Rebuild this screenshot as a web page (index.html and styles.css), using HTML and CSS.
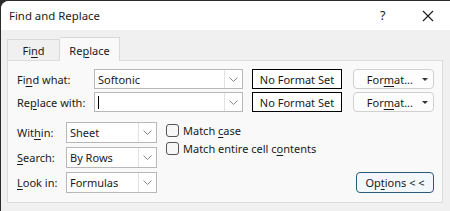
FILE: index.html
```html
<!DOCTYPE html>
<html>
<head>
<meta charset="utf-8">
<link rel="stylesheet" href="styles.css">
</head>
<body>
<div class="window">
  <div class="titlebar">
    <span class="title">Find and Replace</span>
    <span class="help">?</span>
    <span class="close"><svg width="12" height="12" viewBox="0 0 12 12"><path d="M1 1 L11 11 M11 1 L1 11" stroke="#1a1a1a" stroke-width="1.1" fill="none"/></svg></span>
  </div>
  <div class="content">
    <div class="tabs">
      <div class="tab">Fi<u>n</u>d</div>
      <div class="tab active">Re<u>p</u>lace</div>
    </div>
    <div class="panel">
      <div class="toprows">
        <div class="label">Fi<u>n</u>d what:</div>
        <div class="combo"><span class="val">Softonic</span><span class="arrow"><svg width="9" height="5" viewBox="0 0 9 5"><path d="M0.5 0.5 L4.5 4.5 L8.5 0.5" stroke="#8a8a8a" fill="none"/></svg></span></div>
        <div class="nofmt">No Format Set</div>
        <div class="fmtbtn"><span>For<u>m</u>at...</span><svg width="6" height="3" viewBox="0 0 6 3"><path d="M0 0 L6 0 L3 3 Z" fill="#333"/></svg></div>

        <div class="label">Re<u>p</u>lace with:</div>
        <div class="combo"><span class="val"><span class="caret"></span></span><span class="arrow"><svg width="9" height="5" viewBox="0 0 9 5"><path d="M0.5 0.5 L4.5 4.5 L8.5 0.5" stroke="#8a8a8a" fill="none"/></svg></span></div>
        <div class="nofmt">No Format Set</div>
        <div class="fmtbtn"><span>For<u>m</u>at...</span><svg width="6" height="3" viewBox="0 0 6 3"><path d="M0 0 L6 0 L3 3 Z" fill="#333"/></svg></div>
      </div>
      <div class="bottom">
        <div class="opts">
          <div class="label">Wit<u>h</u>in:</div>
          <div class="combo small"><span class="val">Sheet</span><span class="arrow"><svg width="9" height="5" viewBox="0 0 9 5"><path d="M0.5 0.5 L4.5 4.5 L8.5 0.5" stroke="#8a8a8a" fill="none"/></svg></span></div>
          <div class="label"><u>S</u>earch:</div>
          <div class="combo small"><span class="val">By Rows</span><span class="arrow"><svg width="9" height="5" viewBox="0 0 9 5"><path d="M0.5 0.5 L4.5 4.5 L8.5 0.5" stroke="#8a8a8a" fill="none"/></svg></span></div>
          <div class="label"><u>L</u>ook in:</div>
          <div class="combo small"><span class="val">Formulas</span><span class="arrow"><svg width="9" height="5" viewBox="0 0 9 5"><path d="M0.5 0.5 L4.5 4.5 L8.5 0.5" stroke="#8a8a8a" fill="none"/></svg></span></div>
        </div>
        <div class="checks">
          <div class="check"><span class="box"></span><span>Match <u>c</u>ase</span></div>
          <div class="check"><span class="box"></span><span>Match entire cell c<u>o</u>ntents</span></div>
        </div>
        <div class="optbtn">Op<u>t</u>ions &lt; &lt;</div>
      </div>
    </div>
  </div>
</div>
</body>
</html>
```
FILE: styles.css
```css
html, body {
  margin: 0;
  padding: 0;
  width: 450px;
  height: 211px;
  overflow: hidden;
  background: #2b2b2b;
}
body {
  font-family: "Noto Sans", "Open Sans", sans-serif;
  font-size: 11px;
  color: #1a1a1a;
}
u { text-decoration-thickness: 1px; text-underline-offset: 2px; }
.window {
  box-sizing: border-box;
  width: 456px;
  height: 211px;
  margin-top: 1px;
  margin-left: 1px;
  background: #f0f0f0;
  border-radius: 8px 8px 0 0;
  overflow: hidden;
  display: flex;
  flex-direction: column;
}
.titlebar {
  height: 29px;
  background: #ffffff;
  display: flex;
  align-items: center;
  padding-left: 8px;
  flex: none;
}
.title { flex: 1; font-size: 11.4px; }
.help { width: 8px; margin-right: 34px; font-size: 12.5px; }
.close { width: 12px; height: 12px; margin-right: 23px; display: flex; }
.content {
  padding: 7px 0 0 6px;
  flex: 1;
  display: flex;
  flex-direction: column;
}
.tabs {
  display: flex;
  align-items: flex-end;
  height: 23px;
  position: relative;
  z-index: 1;
}
.tab {
  box-sizing: border-box;
  height: 21px;
  width: 53px;
  border: 1px solid #d9d9d9;
  border-bottom: none;
  background: #f0f0f0;
  display: flex;
  align-items: center;
  justify-content: center;
  padding-top: 1px;
}
.tab.active {
  height: 24px;
  width: 60px;
  background: #f9f9f9;
  margin-bottom: -1px;
  border-left: none;
}
.panel {
  box-sizing: border-box;
  width: 436px;
  height: 143px;
  background: #f9f9f9;
  border: 1px solid #dcdcdc;
  padding: 8px 8px 0 9px;
}
.toprows {
  display: grid;
  grid-template-columns: 77px 149px 99px 92px;
  grid-auto-rows: 20px;
  row-gap: 3px;
  align-items: stretch;
}
.label { display: flex; align-items: center; }
.combo {
  box-sizing: border-box;
  border: 1px solid #b8b8b8;
  background: #fff;
  display: flex;
  align-items: stretch;
}
.combo .val { flex: 1; display: flex; align-items: center; padding-left: 3px; }
.combo .arrow {
  width: 17px;
  border-left: 1px solid #e2e2e2;
  display: flex;
  align-items: center;
  justify-content: center;
}
.caret { width: 1px; height: 13px; background: #000; }
.nofmt {
  box-sizing: border-box;
  margin-left: 9px;
  border: 1px solid #000;
  background: #fff;
  display: flex;
  align-items: center;
  justify-content: center;
  white-space: nowrap;
}
.fmtbtn {
  box-sizing: border-box;
  margin-left: 11px;
  border: 1px solid #d0d0d0;
  border-radius: 4px;
  background: #fdfdfd;
  display: flex;
  align-items: center;
  justify-content: flex-end;
  gap: 9px;
  padding-right: 5px;
}
.bottom {
  display: flex;
  margin-top: 10px;
  align-items: flex-start;
}
.opts {
  display: grid;
  grid-template-columns: 49px 91px;
  grid-auto-rows: 21px;
  row-gap: 4px;
}
.checks {
  margin-left: 9px;
  display: flex;
  flex-direction: column;
  gap: 5px;
  padding-top: 2px;
}
.check { display: flex; align-items: center; gap: 4px; height: 13px; }
.box {
  box-sizing: border-box;
  width: 13px;
  height: 13px;
  border: 1px solid #555;
  border-radius: 3px;
  background: #f7f7f7;
}
.optbtn {
  box-sizing: border-box;
  margin-left: auto;
  margin-top: 50px;
  width: 78px;
  height: 21px;
  border: 1px solid #2a5a78;
  border-radius: 4px;
  background: #f3f8fc;
  display: flex;
  align-items: center;
  justify-content: center;
}
```
